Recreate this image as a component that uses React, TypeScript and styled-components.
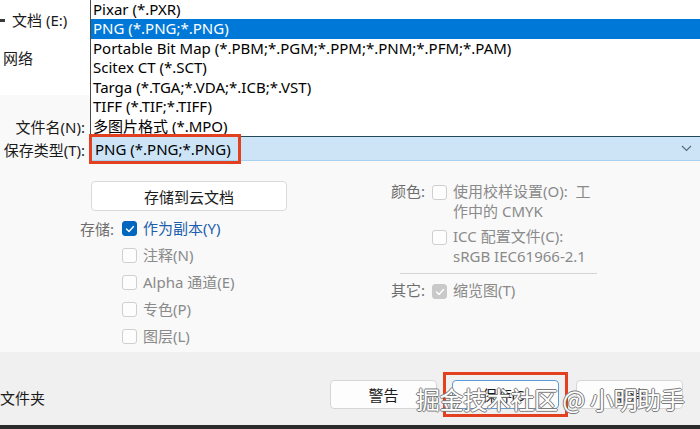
import React from 'react';
import styled, { createGlobalStyle } from 'styled-components';

const GlobalStyle = createGlobalStyle`
  html, body {
    margin: 0;
    padding: 0;
    background: #f9f9f9;
  }
  body {
    font-family: "Noto Sans", "Noto Sans CJK SC", sans-serif;
  }
`;

const FONT = `"Noto Sans", "Noto Sans CJK SC", sans-serif`;

// window
const Window = styled.div`
  position: relative;
  width: 700px;
  height: 429px;
  overflow: hidden;
  background: #f9f9f9;
  font-family: ${FONT};
  font-size: 15px;
  color: #1a1a1a;
  display: flex;
  flex-direction: column;
`;

// top part: nav pane + type list + type field
const TopGrid = styled.div`
  display: grid;
  grid-template-columns: 90px 1fr;
  grid-template-rows: auto 24px;
`;

const LeftPane = styled.div`
  display: flex;
  flex-direction: column;
`;

const NavPane = styled.div`
  height: 95px;
  background: #ffffff;
  padding-top: 9px;
  box-sizing: border-box;
  display: flex;
  flex-direction: column;
  gap: 16px;
`;

const NavItem = styled.div<{ indent: number }>`
  height: 22px;
  line-height: 22px;
  padding-left: ${(p) => p.indent}px;
  display: flex;
  align-items: center;
  white-space: nowrap;
`;

const Expander = styled.span`
  width: 5px;
  height: 3px;
  background: #3a3a3a;
  margin-right: 7px;
  margin-left: -12px;
`;

const FieldLabel = styled.div<{ pushDown?: boolean }>`
  height: 20px;
  line-height: 20px;
  text-align: right;
  padding-right: 5px;
  white-space: nowrap;
  margin-top: ${(p) => (p.pushDown ? 'auto' : '0')};
  align-self: stretch;
`;

const TypeLabel = styled(FieldLabel)`
  height: 24px;
  line-height: 26px;
`;

const List = styled.div`
  background: #ffffff;
  border-left: 1px solid #4a4a4a;
  border-bottom: 1px solid #23495a;
`;

const ListItem = styled.div<{ selected?: boolean }>`
  height: 19.45px;
  line-height: 19.45px;
  padding-left: 2px;
  white-space: nowrap;
  color: ${(p) => (p.selected ? '#ffffff' : '#000000')};
  background: ${(p) => (p.selected ? '#0078d7' : 'transparent')};
`;

const Select = styled.div`
  display: flex;
  align-items: center;
  justify-content: space-between;
  background: #cde4f7;
  border-bottom: 1px solid #a9d2f0;
  box-sizing: border-box;
  padding-right: 8px;
`;

const MarkBox = styled.span`
  display: inline-flex;
  align-items: center;
  height: 30px;
  box-sizing: border-box;
  border: 3px solid #e2401f;
  padding: 0 7px 0 3px;
  margin-left: -1px;
  margin-top: 1px;
  color: #000;
  white-space: nowrap;
`;

// options
const Options = styled.div`
  height: 191px;
  display: flex;
`;

const LeftCol = styled.div`
  width: 391px;
  box-sizing: border-box;
  padding-left: 80px;
  display: flex;
  flex-direction: column;
`;

const CloudButton = styled.div`
  margin-top: 20px;
  margin-left: 11px;
  width: 196px;
  height: 30px;
  box-sizing: border-box;
  background: #ffffff;
  border: 1px solid #dadada;
  border-radius: 4px;
  display: flex;
  align-items: center;
  justify-content: center;
`;

const OptGroup = styled.div`
  margin-top: 4px;
  display: flex;
  flex-direction: column;
`;

const OptRow = styled.div`
  height: 27px;
  display: flex;
  align-items: center;
`;

const GroupLabel = styled.div`
  width: 42px;
  flex-shrink: 0;
  color: #6e6e6e;
  white-space: nowrap;
`;

const BoxWrap = styled.span<{ variant: 'on' | 'off' | 'dim' }>`
  width: 15px;
  height: 15px;
  box-sizing: border-box;
  border-radius: 3px;
  margin-right: 6px;
  flex-shrink: 0;
  display: inline-flex;
  align-items: center;
  justify-content: center;
  background: ${(p) => (p.variant === 'on' ? '#0067c0' : p.variant === 'dim' ? '#c9c9c9' : '#fdfdfd')};
  border: 1px solid ${(p) => (p.variant === 'on' ? '#0067c0' : p.variant === 'dim' ? '#c9c9c9' : '#cfcfcf')};
`;

const OptText = styled.span<{ tone: 'blue' | 'gray' }>`
  color: ${(p) => (p.tone === 'blue' ? '#1d5fae' : '#8a8a8a')};
  white-space: nowrap;
  line-height: 19.5px;
`;

const RightCol = styled.div`
  padding-top: 21px;
  display: flex;
  flex-direction: column;
`;

const RightRow = styled.div<{ gapTop?: number }>`
  display: flex;
  align-items: flex-start;
  margin-top: ${(p) => p.gapTop ?? 0}px;
`;

const RightLabel = styled(GroupLabel)`
  width: 41px;
  line-height: 19.5px;
`;

const RightBox = styled.div`
  margin-top: 3px;
  display: flex;
`;

const Divider = styled.div`
  margin: 7px 0 7px 9px;
  width: 197px;
  height: 1px;
  background: #d4d4d4;
`;

// footer
const Footer = styled.div`
  height: 73px;
  box-sizing: border-box;
  padding-top: 12px;
  background: #f0f0f0;
  display: flex;
  align-items: center;
  justify-content: space-between;
  padding-right: 17px;
`;

const FolderToggle = styled.div`
  margin-top: 5px;
  white-space: nowrap;
`;

const ButtonRow = styled.div`
  display: flex;
  align-items: center;
  gap: 6px;
`;

const Button = styled.div<{ focused?: boolean }>`
  width: 107px;
  height: 29px;
  box-sizing: border-box;
  background: #fdfdfd;
  border: 1px solid ${(p) => (p.focused ? '#5c9bd6' : '#d6d6d6')};
  border-radius: 4px;
  display: flex;
  align-items: center;
  justify-content: center;
  font-size: 15px;
  color: #1a1a1a;
`;

const Highlight = styled.div`
  border: 3px solid #e2401f;
  padding: 5px 6px;
  margin-right: 2px;
`;

const BottomStrip = styled.div`
  height: 4px;
  background: #2b2b2b;
`;

const Watermark = styled.div`
  position: absolute;
  left: 416px;
  top: 383px;
  font-size: 24px;
  line-height: 32px;
  letter-spacing: -0.4px;
  color: #ffffff;
  white-space: nowrap;
  font-family: "Noto Sans CJK SC", sans-serif;
  text-shadow: 1px 0 0 #7a7a7a, -1px 0 0 #7a7a7a, 0 1px 0 #7a7a7a, 0 -1px 0 #7a7a7a;
  pointer-events: none;
`;

const Check = ({ color }: { color: string }) => (
  <svg width="10" height="8" viewBox="0 0 10 8">
    <polyline points="1.5,4 4,6.5 8.5,1.5" fill="none" stroke={color} strokeWidth="1.4" strokeLinecap="round" strokeLinejoin="round" />
  </svg>
);

const Checkbox = ({ variant }: { variant: 'on' | 'off' | 'dim' }) => (
  <BoxWrap variant={variant}>
    {variant !== 'off' && <Check color="#ffffff" />}
  </BoxWrap>
);

const Chevron = () => (
  <svg width="11" height="7" viewBox="0 0 11 7">
    <polyline points="1,1 5.5,5.5 10,1" fill="none" stroke="#5a6a78" strokeWidth="1.2" />
  </svg>
);

const types = [
  'Pixar (*.PXR)',
  'PNG (*.PNG;*.PNG)',
  'Portable Bit Map (*.PBM;*.PGM;*.PPM;*.PNM;*.PFM;*.PAM)',
  'Scitex CT (*.SCT)',
  'Targa (*.TGA;*.VDA;*.ICB;*.VST)',
  'TIFF (*.TIF;*.TIFF)',
  '多图片格式 (*.MPO)',
];

const storeOptions: { label: string; on: boolean }[] = [
  { label: '作为副本(Y)', on: true },
  { label: '注释(N)', on: false },
  { label: 'Alpha 通道(E)', on: false },
  { label: '专色(P)', on: false },
  { label: '图层(L)', on: false },
];

const App: React.FC = () => {
  return (
    <Window>
      <GlobalStyle />
      <TopGrid>
        <LeftPane>
          <NavPane>
            <NavItem indent={12}>
              <Expander />
              文档 (E:)
            </NavItem>
            <NavItem indent={3}>网络</NavItem>
          </NavPane>
          <FieldLabel pushDown>文件名(N):</FieldLabel>
        </LeftPane>
        <List>
          {types.map((t, i) => (
            <ListItem key={t} selected={i === 1}>
              {t}
            </ListItem>
          ))}
        </List>
        <TypeLabel>保存类型(T):</TypeLabel>
        <Select>
          <MarkBox>PNG (*.PNG;*.PNG)</MarkBox>
          <Chevron />
        </Select>
      </TopGrid>

      <Options>
        <LeftCol>
          <CloudButton>存储到云文档</CloudButton>
          <OptGroup>
            {storeOptions.map((o, i) => (
              <OptRow key={o.label}>
                <GroupLabel>{i === 0 ? '存储:' : ''}</GroupLabel>
                <Checkbox variant={o.on ? 'on' : 'off'} />
                <OptText tone={o.on ? 'blue' : 'gray'}>{o.label}</OptText>
              </OptRow>
            ))}
          </OptGroup>
        </LeftCol>
        <RightCol>
          <RightRow>
            <RightLabel>颜色:</RightLabel>
            <RightBox>
              <Checkbox variant="off" />
            </RightBox>
            <OptText tone="gray">
              使用校样设置(O):&nbsp;&nbsp;工
              <br />
              作中的 CMYK
            </OptText>
          </RightRow>
          <RightRow gapTop={6}>
            <RightLabel />
            <RightBox>
              <Checkbox variant="off" />
            </RightBox>
            <OptText tone="gray">
              ICC 配置文件(C):
              <br />
              sRGB IEC61966-2.1
            </OptText>
          </RightRow>
          <Divider />
          <RightRow>
            <RightLabel>其它:</RightLabel>
            <RightBox>
              <Checkbox variant="dim" />
            </RightBox>
            <OptText tone="gray">缩览图(T)</OptText>
          </RightRow>
        </RightCol>
      </Options>

      <Footer>
        <FolderToggle>文件夹</FolderToggle>
        <ButtonRow>
          <Button>警告</Button>
          <Highlight>
            <Button focused>保存(S)</Button>
          </Highlight>
          <Button>取消</Button>
        </ButtonRow>
      </Footer>
      <BottomStrip />

      <Watermark>掘金技术社区 @ 小明助手</Watermark>
    </Window>
  );
};

export default App;
